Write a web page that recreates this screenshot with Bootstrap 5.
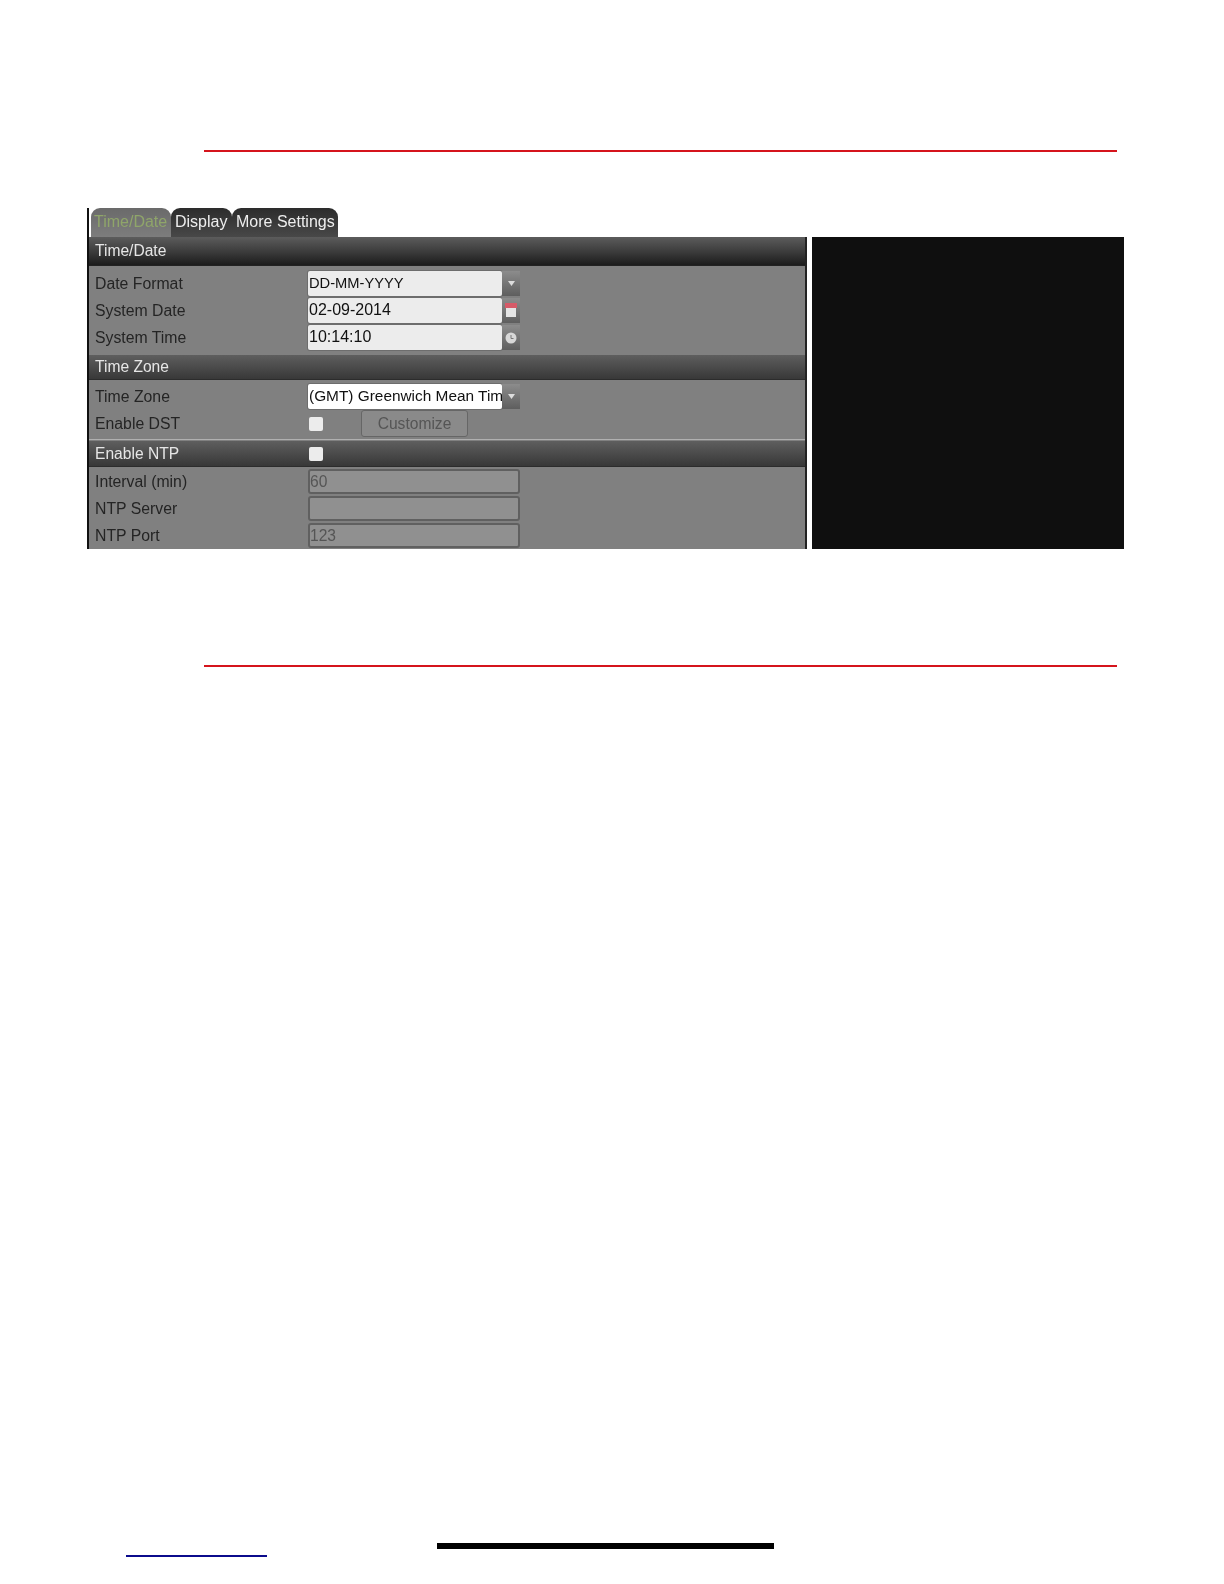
<!DOCTYPE html>
<html lang="en">
<head>
<meta charset="utf-8">
<title>Time/Date settings</title>
<link href="https://cdn.jsdelivr.net/npm/bootstrap@5.3.0/dist/css/bootstrap.min.css" rel="stylesheet">
<style>
html,body{margin:0;background:#fff;}
.sheet{width:1224px;height:1584px;display:flex;flex-direction:column;overflow:hidden;font-family:"Liberation Sans",Arial,sans-serif;}
.rule-red{height:2px;background:#d5141c;margin-left:204px;width:913px;flex:none;}
.rule-a{margin-top:150px;}
.rule-b{margin-top:116px;}
.shot-wrap{display:flex;margin:56px 0 0 87px;gap:5px;align-items:flex-end;height:341px;flex:none;}
.dvr{width:720px;height:341px;display:flex;flex-direction:column;filter:blur(.6px);border-left:2px solid #111;flex:none;overflow:hidden;}
.blackout{width:312px;height:312px;background:#0f0f0f;flex:none;}
.tabbar{height:29px;flex:none;display:flex;background:#fff;padding-left:2px;}
.dtab{height:29px;padding:5px 4px 0;font-size:16px;line-height:18px;color:#eee;border-radius:9px 9px 0 0;background:linear-gradient(#2c2c2c,#484848);white-space:nowrap;overflow:hidden;}
.dtab-on{width:80px;padding-left:3px;color:#8fa56a;background:linear-gradient(#6a6a6a,#7d7d7d);}
.dtab-b{width:61px;}
.dtab-c{width:106px;}
.body-grey{flex:1;background:#808080;display:flex;flex-direction:column;border-right:2px solid #222;}
.head-row{display:flex;align-items:center;color:#e6e6e6;font-size:15.600px;padding-left:6px;flex:none;}
.head-a{height:29px;background:linear-gradient(#5c5c5c,#3a3a3a 55%,#1c1c1c);border-bottom:1px solid #222;}
.head-b{height:25px;margin-top:4px;background:linear-gradient(#5e5e5e,#383838);border-bottom:1px solid #2c2c2c;}
.head-c{height:26px;margin-top:1px;background:linear-gradient(#5e5e5e,#383838);border-bottom:1px solid #2c2c2c;}
.form-rows{display:flex;flex-direction:column;padding-top:3px;flex:none;}
.rows-top{padding-top:4px;}
.rows-low{padding-top:1px;}
.frow{height:27px;display:flex;align-items:center;padding-left:6px;font-size:15.800px;color:#242424;flex:none;}
.lbl{width:213px;flex:none;}
.head-row .lbl{color:#e6e6e6;}
.combo{display:flex;width:212px;height:25px;flex:none;}
.field{width:194px;background:#ececec;color:#111;border-radius:2px;font-size:16px;line-height:24px;padding-left:1px;overflow:hidden;white-space:nowrap;box-shadow:0 0 0 1px #6d6d6d;}
.field-narrow{font-size:14.700px;}
.field-zone{background:#fff;font-size:15.400px;}
.side{width:18px;background:linear-gradient(#8c8c8c,#5e5e5e);display:flex;align-items:center;justify-content:center;}
.dim{width:212px;height:25px;background:#909090;color:#555;border:2px solid #606060;border-radius:3px;font-size:15.600px;line-height:21px;flex:none;}
.tick{width:14px;height:14px;background:#ececec;border-radius:2px;margin-left:1px;flex:none;}
.custom{width:107px;height:27px;margin-left:38px;background:#8a8a8a;border:1px solid #666;border-radius:3px;color:#555;font-size:15.600px;line-height:25px;text-align:center;flex:none;}
.sep{height:1px;background:#b0b0b0;margin-top:2px;flex:none;}
.rule-black{width:337px;height:6px;background:#000;margin:876px 0 0 437px;flex:none;}
.rule-blue{width:141px;height:2px;background:#0b0b8c;margin:6px 0 0 126px;flex:none;}
</style>
</head>
<body>
<div class="sheet">
  <div class="rule-red rule-a"></div>
  <div class="shot-wrap">
    <div class="dvr">
      <div class="tabbar">
        <div class="dtab dtab-on">Time/Date</div>
        <div class="dtab dtab-b">Display</div>
        <div class="dtab dtab-c">More Settings</div>
      </div>
      <div class="body-grey">
        <div class="head-row head-a">Time/Date</div>
        <div class="form-rows rows-top">
          <div class="frow"><div class="lbl">Date Format</div><div class="combo"><div class="field field-narrow">DD-MM-YYYY</div><div class="side"><svg width="9" height="7" viewBox="0 0 9 7"><path d="M1 1h7L4.500 6z" fill="#ddd"/></svg></div></div></div>
          <div class="frow"><div class="lbl">System Date</div><div class="combo"><div class="field">02-09-2014</div><div class="side"><svg width="12" height="15" viewBox="0 0 12 15"><rect x="0" y="0" width="12" height="5" fill="#d65a68"/><rect x="1" y="5" width="10" height="9" fill="#e4e4e4"/></svg></div></div></div>
          <div class="frow"><div class="lbl">System Time</div><div class="combo"><div class="field">10:14:10</div><div class="side"><svg width="12" height="12" viewBox="0 0 12 12"><circle cx="6" cy="6" r="5.500" fill="#d8d8d8"/><path d="M6 3v3.500h2.500" stroke="#777" fill="none"/></svg></div></div></div>
        </div>
        <div class="head-row head-b">Time Zone</div>
        <div class="form-rows">
          <div class="frow"><div class="lbl">Time Zone</div><div class="combo"><div class="field field-zone">(GMT) Greenwich Mean Tim</div><div class="side"><svg width="9" height="7" viewBox="0 0 9 7"><path d="M1 1h7L4.500 6z" fill="#ddd"/></svg></div></div></div>
          <div class="frow"><div class="lbl">Enable DST</div><div class="tick"></div><div class="custom">Customize</div></div>
        </div>
        <div class="sep"></div>
        <div class="head-row head-c"><div class="lbl">Enable NTP</div><div class="tick"></div></div>
        <div class="form-rows rows-low">
          <div class="frow"><div class="lbl">Interval (min)</div><div class="dim">60</div></div>
          <div class="frow"><div class="lbl">NTP Server</div><div class="dim"></div></div>
          <div class="frow"><div class="lbl">NTP Port</div><div class="dim">123</div></div>
        </div>
      </div>
    </div>
    <div class="blackout"></div>
  </div>
  <div class="rule-red rule-b"></div>
  <div class="rule-black"></div>
  <div class="rule-blue"></div>
</div>
<script src="https://cdn.jsdelivr.net/npm/bootstrap@5.3.0/dist/js/bootstrap.bundle.min.js"></script>
</body>
</html>
